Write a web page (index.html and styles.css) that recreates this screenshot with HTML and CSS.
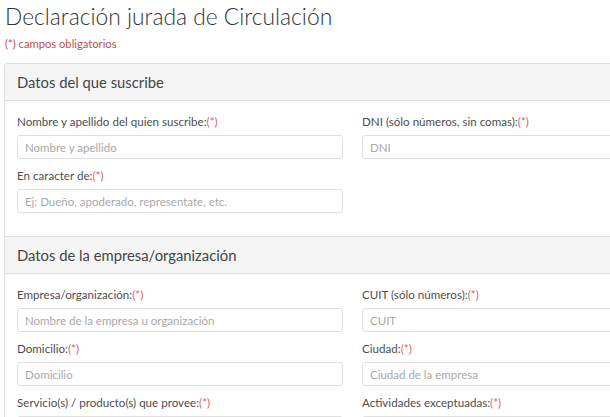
FILE: index.html
```html
<!DOCTYPE html>
<html lang="es">
<head>
<meta charset="utf-8">
<title>Declaración jurada de Circulación</title>
<link rel="stylesheet" href="styles.css">
</head>
<body>
<div class="page">
  <h1 class="title">Declaración jurada de Circulación</h1>
  <p class="note">(*) campos obligatorios</p>
  <div class="panel">
    <div class="panel-heading">Datos del que suscribe</div>
    <div class="panel-body">
      <div class="row">
        <div class="group">
          <label class="label">Nombre y apellido del quien suscribe:<span class="req">(*)</span></label>
          <input class="input" type="text" placeholder="Nombre y apellido">
        </div>
        <div class="group">
          <label class="label">DNI (sólo números, sin comas):<span class="req">(*)</span></label>
          <input class="input" type="text" placeholder="DNI">
        </div>
      </div>
      <div class="row">
        <div class="group">
          <label class="label">En caracter de:<span class="req">(*)</span></label>
          <input class="input" type="text" placeholder="Ej: Dueño, apoderado, representate, etc.">
        </div>
      </div>
    </div>
    <div class="panel-heading second">Datos de la empresa/organización</div>
    <div class="panel-body">
      <div class="row">
        <div class="group">
          <label class="label">Empresa/organización:<span class="req">(*)</span></label>
          <input class="input" type="text" placeholder="Nombre de la empresa u organización">
        </div>
        <div class="group">
          <label class="label">CUIT (sólo números):<span class="req">(*)</span></label>
          <input class="input" type="text" placeholder="CUIT">
        </div>
      </div>
      <div class="row">
        <div class="group">
          <label class="label">Domicilio:<span class="req">(*)</span></label>
          <input class="input" type="text" placeholder="Domicilio">
        </div>
        <div class="group">
          <label class="label">Ciudad:<span class="req">(*)</span></label>
          <input class="input" type="text" placeholder="Ciudad de la empresa">
        </div>
      </div>
      <div class="row">
        <div class="group">
          <label class="label">Servicio(s) / producto(s) que provee:<span class="req">(*)</span></label>
          <input class="input" type="text" placeholder="">
        </div>
        <div class="group">
          <label class="label">Actividades exceptuadas:<span class="req">(*)</span></label>
          <input class="input" type="text" placeholder="">
        </div>
      </div>
    </div>
  </div>
</div>
</body>
</html>
```

FILE: styles.css
```css
html, body {
  margin: 0;
  padding: 0;
  overflow: hidden;
  background: #fff;
}
body {
  font-family: "Lato", "DejaVu Sans", sans-serif;
  color: #444;
}
.page {
  width: 720px;
}
.title {
  margin: 0;
  padding-left: 5px;
  height: 33px;
  line-height: 33px;
  font-size: 22.8px;
  font-weight: 300;
  color: #333;
}
.note {
  margin: 4px 0 0 5px;
  height: 14px;
  line-height: 14px;
  font-size: 11.2px;
  color: #c0504d;
}
.panel {
  margin: 12px 0 0 4px;
  width: 700px;
  border: 1px solid #ddd;
  border-radius: 3px;
}
.panel-heading {
  background: #f5f5f5;
  height: 36px;
  line-height: 36px;
  padding: 0 12px;
  font-size: 14.8px;
  color: #444;
  border-bottom: 1px solid #ddd;
}
.panel-heading.second {
  border-top: 1px solid #ddd;
}
.panel-body {
  padding: 13px 12px 14px;
}
.row {
  display: grid;
  grid-template-columns: 326px 326px;
  column-gap: 19px;
}
.group {
  display: flex;
  flex-direction: column;
  margin-bottom: 9px;
}
.label {
  height: 16px;
  line-height: 16px;
  margin-bottom: 5px;
  font-size: 11.6px;
  color: #4d4d4d;
  white-space: nowrap;
}
.req {
  color: #e06060;
}
.input {
  box-sizing: border-box;
  height: 24px;
  margin: 0;
  padding: 0 7px;
  border: 1px solid #e0e0e0;
  border-radius: 3px;
  font-family: inherit;
  font-size: 11.5px;
  color: #555;
  background: #fff;
  outline: none;
}
.input::placeholder {
  color: #a8a8a8;
}
```
